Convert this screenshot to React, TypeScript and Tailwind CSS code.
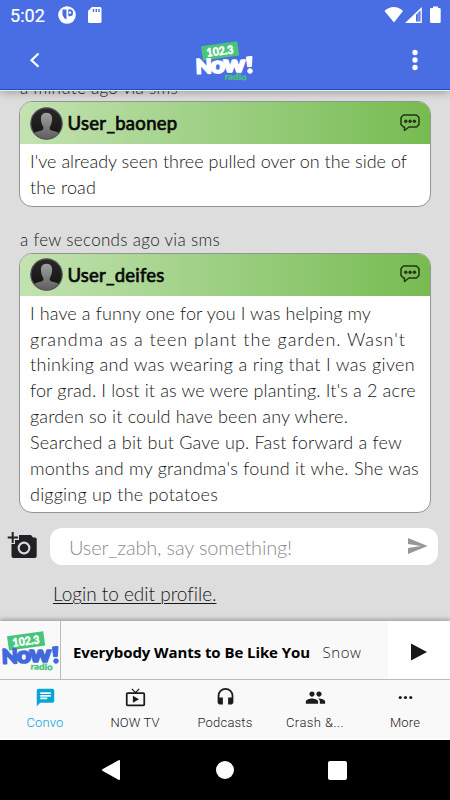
import { useLayoutEffect, useRef, useState, type ReactNode } from "react";

type FitProps = { children: string; width: number; className?: string };

/* Single line of text whose tracking is adjusted to fill a given width. */
function Fit({ children, width, className = "" }: FitProps) {
  const ref = useRef<HTMLSpanElement>(null);
  const [spacing, setSpacing] = useState(0);
  useLayoutEffect(() => {
    const el = ref.current;
    if (!el) return;
    const previous = el.style.letterSpacing;
    el.style.letterSpacing = "0px";
    const natural = el.getBoundingClientRect().width;
    el.style.letterSpacing = previous;
    setSpacing((width - natural) / children.length);
  }, [children, width]);
  return (
    <span ref={ref} className={`inline-block whitespace-pre ${className}`} style={{ letterSpacing: `${spacing}px` }}>
      {children}
    </span>
  );
}

function Logo({ className, word, green }: { className: string; word: string; green: string }) {
  return (
    <svg viewBox="0 0 60 42" className={className} fontFamily="Lato, 'Open Sans', sans-serif" fontWeight="900">
      <path d="M7 6.2 43.2 1.2 45.2 15.4 9 20.4Z" fill={green} />
      <text x="12.5" y="15.2" fontSize="11.5" fill="#fff" stroke="#fff" strokeWidth="0.5" textLength="27" lengthAdjust="spacingAndGlyphs" transform="rotate(-7 26 11)">102.3</text>
      <g fill={word} stroke={word} strokeWidth="1.7" strokeLinejoin="round">
        <text x="1.8" y="33.6" fontSize="20" textLength="16" lengthAdjust="spacingAndGlyphs" transform="rotate(-2 9 26)">N</text>
        <text x="16.6" y="33" fontSize="23" textLength="14.5" lengthAdjust="spacingAndGlyphs">o</text>
        <text x="29.4" y="32.2" fontSize="22" textLength="21.5" lengthAdjust="spacingAndGlyphs">w</text>
        <path strokeWidth="1" d="M52.4 17 58 16.4 57.4 26.4 53.6 26.7Z" />
        <circle strokeWidth="1" cx="56" cy="31" r="2.3" />
      </g>
      <text x="30.5" y="39.8" fontSize="8.8" fill={green} stroke={green} strokeWidth="0.3" textLength="22" lengthAdjust="spacingAndGlyphs" transform="rotate(2 42 38)">radio</text>
    </svg>
  );
}

function Avatar({ id }: { id: string }) {
  return (
    <svg viewBox="0 0 33 33" className="h-[33px] w-[33px] shrink-0">
      <defs>
        <linearGradient id={`${id}-bg`} x1="0" y1="0" x2="0" y2="1">
          <stop offset="0" stopColor="#292929" />
          <stop offset="1" stopColor="#111" />
        </linearGradient>
        <linearGradient id={`${id}-fg`} x1="0" y1="0" x2="0" y2="1">
          <stop offset="0" stopColor="#a0a0a0" />
          <stop offset="1" stopColor="#5c5c5c" />
        </linearGradient>
        <clipPath id={`${id}-clip`}><circle cx="16.5" cy="16.5" r="15.8" /></clipPath>
      </defs>
      <circle cx="16.5" cy="16.5" r="15.8" fill={`url(#${id}-bg)`} />
      <path clipPath={`url(#${id}-clip)`} fill={`url(#${id}-fg)`} d="M16.5 5.8c-4.2 0-5.9 3-5.5 7 .2 3.2 1.2 5.600 2.300 7v2.400c-.7 1.500-7 2-10 4.300V33h26.500v-6.500c-3-2.300-9.300-2.800-10-4.300v-2.400c1.100-1.400 2.100-3.800 2.300-7 .4-4-1.400-7-5.600-7Z" />
      <circle cx="16.5" cy="16.5" r="15.7" fill="none" stroke="#57565c" strokeWidth="1.2" />
    </svg>
  );
}

type MessageProps = { id: string; user: string; userWidth: number; lines: [string, number][] };

function Message({ id, user, userWidth, lines }: MessageProps) {
  return (
    <article className="ml-[19px] w-[412px] overflow-hidden rounded-[13px] border border-[#949494] bg-white">
      <header className="flex h-[42px] items-center bg-linear-to-r from-[#c3e2b1] via-[#9bcf81] to-[#77bb50] pl-[9.5px] pr-[10px]">
        <Avatar id={id} />
        <Fit width={userWidth} className="ml-[5px] text-[18.5px] leading-[42px] font-normal text-[#0a0a0a] [-webkit-text-stroke:0.7px_#0a0a0a]">{user}</Fit>
        <svg viewBox="0 0 20 18" className="mt-[-1px] ml-auto h-[18px] w-[20px]" fill="none" stroke="#233515" strokeWidth="1.5">
          <path d="M3.500 1h13L19 3.500v7L16.500 13H9l-4.500 3.500V13H3.500L1 10.500v-7L3.500 1Z" strokeLinejoin="round" />
          <g fill="#233515" stroke="none"><circle cx="5.800" cy="7.300" r="1.700" /><circle cx="10.100" cy="7.300" r="1.700" /><circle cx="14.400" cy="7.300" r="1.700" /></g>
        </svg>
      </header>
      <div className="flex flex-col items-start pt-[5px] pb-[5px] pl-[10px] text-[18px] leading-[25.85px] text-[#171717]">
        {lines.map(([text, width]) => <Fit key={text} width={width}>{text}</Fit>)}
      </div>
    </article>
  );
}

function Tab({ label, width, icon, active = false }: { label: string; width: number; icon: ReactNode; active?: boolean }) {
  return (
    <div className={`flex flex-1 flex-col items-center pt-[7px] ${active ? "text-[#08a5d9]" : "text-[#1c1c1c]"}`}>
      <svg viewBox="0 0 24 24" className="h-[21px] w-[21px]" fill="currentColor">{icon}</svg>
      <Fit width={width} className="mt-[5px] font-['Roboto',sans-serif] text-[13px] leading-[20px] font-light">{label}</Fit>
    </div>
  );
}

const first: [string, number][] = [["I've already seen three pulled over on the side of", 377], ["the road", 66]];
const second: [string, number][] = [
  ["I have a funny one for you I was helping my", 341],
  ["grandma as a teen plant the garden. Wasn't", 376],
  ["thinking and was wearing a ring that I was given", 385],
  ["for grad. I lost it as we were planting. It's a 2 acre", 386],
  ["garden so it could have been any where.", 318],
  ["Searched a bit but Gave up. Fast forward a few", 372],
  ["months and my grandma's found it whe. She was", 389],
  ["digging up the potatoes", 188],
];

export default function App() {
  return (
    <div className="flex h-[800px] w-[450px] flex-col overflow-hidden bg-[#ddd] font-['Lato','Open_Sans',sans-serif] font-light">
      <header className="relative z-10 flex h-[90px] shrink-0 flex-col border-b border-[#1750ca] bg-[#496ee4] text-white shadow-[0_1px_0_#e9eee2,0_3px_8px_#00000045]">
        <div className="flex h-[30px] items-center pl-[10px]">
          <Fit width={35} className="pt-[1px] font-['Roboto',sans-serif] text-[18px] leading-[30px] font-normal [-webkit-text-stroke:0.2px_white]">5:02</Fit>
          <svg viewBox="0 0 45 20" className="ml-[13px] h-[20px] w-[45px]" fill="currentColor">
            <circle cx="9" cy="10" r="8.800" />
            <path fill="#496ee4" d="M4.500 4.500h4v10A7 7 0 0 1 4.500 10Zm5.800-.3h1.300a3.500 3.500 0 1 1 0 7h-1.300Z" />
            <circle cx="12" cy="7.600" r="1.200" />
            <path d="M34 2h8.200q1.300 0 1.300 1.500v13q0 1.500-1.500 1.500H31.500Q30 18 30 16.500V6Z" />
            <path stroke="#496ee4" strokeWidth="1.400" d="M35.500 4v3M38.300 4v3M41 4v3" />
          </svg>
          <svg viewBox="0 0 60 20" className="ml-auto mr-[8px] h-[20px] w-[60px]" fill="currentColor">
            <path d="M2.500 6C8 .7 15.500.7 21 6L12 17.600Z" />
            <path d="M39.800 2v16H23Z" />
            <path fill="#496ee4" d="M38.500 5.500V16.500H34V9.800Z" />
            <path d="M35.500 8.300h2.200v8.300h-2.200z" opacity=".25" />
            <path d="M49 3h2V1.500h5V3h1.500q1.200 0 1.200 1.300v12.400q0 1.300-1.300 1.300h-8q-1.400 0-1.400-1.300V4.300Q48 3 49 3Z" />
          </svg>
        </div>
        <div className="flex h-[59px] items-center justify-between pl-[29px] pr-[30px]">
          <svg viewBox="0 0 12 16" className="h-[16px] w-[12px]" fill="none" stroke="currentColor" strokeWidth="2.200"><path d="m9.500 1.500-7 6.700 7 6.600" /></svg>
          <Logo className="mr-[4px] mt-[2px] h-[42px] w-[60px]" word="#fff" green="#48c578" />
          <svg viewBox="0 0 10 22" className="h-[22px] w-[10px]" fill="currentColor"><circle cx="5" cy="3.500" r="2.700" /><circle cx="5" cy="11" r="2.700" /><circle cx="5" cy="18.500" r="2.700" /></svg>
        </div>
      </header>

      <main className="flex h-[531px] shrink-0 flex-col text-[#222]">
        <div className="mt-[-14px] mb-[1px] ml-[20px] h-[24px] text-[17px] leading-[24px]"><Fit width={158}>a minute ago via sms</Fit></div>
        <Message id="baonep" user="User_baonep" userWidth={110} lines={first} />
        <div className="mt-[21px] mb-[1px] ml-[20px] h-[24px] text-[17px] leading-[24px]"><Fit width={200}>a few seconds ago via sms</Fit></div>
        <Message id="deifes" user="User_deifes" userWidth={97} lines={second} />
        <div className="mt-[14px] flex h-[38px] items-center">
          <svg viewBox="0 0 30 28" className="ml-[7px] h-[28px] w-[30px]" fill="#202124">
            <path d="M4.700 0h2v4.400H11v2.100H6.700V11h-2V6.500H.7V4.400h4Z" />
            <path d="M12 3h12l2 2.500h2q1.700 0 1.700 2v16.500q0 2-2 2H6.500q-2 0-2-2V12H8V8h4Z" />
            <circle cx="17" cy="16" r="6.400" fill="#ddd" /><circle cx="17" cy="16" r="4.300" />
          </svg>
          <div className="ml-[13px] flex h-[37px] w-[388px] items-center rounded-[12px] bg-white pl-[19px] pr-[10px] text-[#8b8b8b]">
            <Fit width={223} className="pt-[2px] text-[20px] leading-[36px]">User_zabh, say something!</Fit>
            <svg viewBox="0 0 20 18" className="ml-auto h-[18px] w-[20px]" fill="#969696"><path d="M0 1v6l13 2-13 2v6l19.500-8Z" /></svg>
          </div>
        </div>
        <div className="mt-[15px] ml-[53px] text-[19px] leading-[27px] text-[#171717]"><Fit width={163} className="underline decoration-1 underline-offset-2">Login to edit profile.</Fit></div>
      </main>

      <section className="relative flex h-[59px] shrink-0 border-b border-[#bbb] bg-[#f9f9f9] shadow-[0_-2px_4px_#00000045]">
        <div className="w-[61px] border-r border-[#bbb] pt-[9px]"><Logo className="h-[42px] w-[60px]" word="#4169dc" green="#48c578" /></div>
        <div className="flex w-[327px] items-center pl-[12px] pt-[4px]">
          <Fit width={237} className="font-['Open_Sans',sans-serif] text-[15px] font-bold text-black">Everybody Wants to Be Like You</Fit>
          <Fit width={39} className="ml-[12.500px] font-['Open_Sans',sans-serif] text-[15px] font-light text-[#222]">Snow</Fit>
        </div>
        <div className="flex flex-1 items-center bg-white pl-[23px] pt-[4px]">
          <svg viewBox="0 0 16 18" className="h-[18px] w-[16px]" fill="#181818"><path d="M0 .5 16 9 0 17.500Z" /></svg>
        </div>
      </section>

      <nav className="relative flex h-[60px] shrink-0 border-b-2 border-white bg-[#f9f9f9]">
        <Tab active label="Convo" width={37} icon={<path d="M20 2H4q-2 0-2 2v18l4-4h14q2 0 2-2V4q0-2-2-2ZM6 6h12v2H6Zm0 3h12v2H6Zm0 3h8v2H6Z" />} />
        <Tab label="NOW TV" width={49} icon={<><path d="M21 6h-7.600l3.300-3.300-1-1L12 5.400 8.300 1.700l-1 1L10.600 6H3a2 2 0 0 0-2 2v12c0 1.100.9 2 2 2h18a2 2 0 0 0 2-2V8a2 2 0 0 0-2-2Zm0 14H3V8h18Z" /><path d="M9 10v8l7-4Z" /></>} />
        <Tab label="Podcasts" width={55} icon={<path d="M12 1a9 9 0 0 0-9 9v7c0 1.700 1.300 3 3 3h3v-8H5v-2a7 7 0 0 1 14 0v2h-4v8h3c1.700 0 3-1.300 3-3v-7a9 9 0 0 0-9-9Z" />} />
        <Tab label="Crash &..." width={58} icon={<path d="M16 11c1.660 0 2.990-1.340 2.990-3S17.660 5 16 5s-3 1.340-3 3 1.340 3 3 3Zm-8 0c1.660 0 2.990-1.340 2.990-3S9.660 5 8 5 5 6.340 5 8s1.340 3 3 3Zm0 2c-2.330 0-7 1.170-7 3.500V19h14v-2.500C15 14.170 10.330 13 8 13Zm8 0c-.29 0-.62.020-.97.050A4.220 4.220 0 0 1 17 16.500V19h6v-2.500c0-2.330-4.670-3.500-7-3.500Z" />} />
        <Tab label="More" width={30} icon={<><circle cx="6" cy="12" r="1.800" /><circle cx="12" cy="12" r="1.800" /><circle cx="18" cy="12" r="1.800" /></>} />
      </nav>

      <footer className="flex h-[60px] shrink-0 items-center justify-between bg-black pl-[102px] pr-[102px]">
        <svg viewBox="0 0 20 22" className="h-[22px] w-[20px]" fill="#fff"><path d="M0 11Q0 10.500.8 10L16.500 1.300Q18 .5 18 2v18q0 1.500-1.500.7L.8 12Q0 11.500 0 11Z" /></svg>
        <div className="mr-[1px] h-[18px] w-[18px] rounded-full bg-white" />
        <div className="mr-[1px] h-[19px] w-[19px] rounded-[2px] bg-white" />
      </footer>
    </div>
  );
}
